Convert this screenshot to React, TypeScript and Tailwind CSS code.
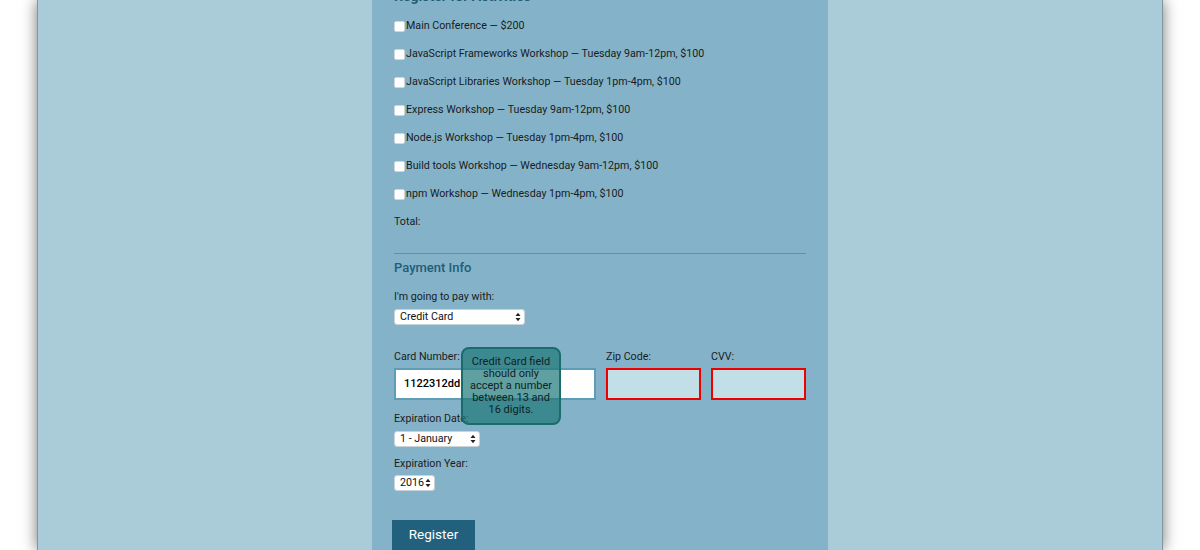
import React from "react";

const activities = [
  "Main Conference — $200",
  "JavaScript Frameworks Workshop — Tuesday 9am-12pm, $100",
  "JavaScript Libraries Workshop — Tuesday 1pm-4pm, $100",
  "Express Workshop — Tuesday 9am-12pm, $100",
  "Node.js Workshop — Tuesday 1pm-4pm, $100",
  "Build tools Workshop — Wednesday 9am-12pm, $100",
  "npm Workshop — Wednesday 1pm-4pm, $100",
];

function Arrows() {
  return (
    <svg width="6" height="10" viewBox="0 0 6 10" className="shrink-0">
      <path d="M0.5 4 L3 0.8 L5.5 4 Z" fill="#222" />
      <path d="M0.5 6 L3 9.2 L5.5 6 Z" fill="#222" />
    </svg>
  );
}

function FakeSelect({ label, width }: { label: string; width: string }) {
  return (
    <div
      className={`${width} h-[16px] bg-white rounded-[3px] border border-[#c9d3d8] flex items-center justify-between pl-[5px] pr-[3px] text-[10.7px] text-[#111] leading-none`}
    >
      <span>{label}</span>
      <Arrows />
    </div>
  );
}

export default function App() {
  return (
    <div
      className="w-[1200px] h-[550px] bg-white overflow-hidden flex justify-center"
      style={{ fontFamily: "Roboto, 'Liberation Sans', sans-serif" }}
    >
      <div className="w-[1126px] h-[550px] bg-[#aacbd8] border-x border-[#7d96a1] shadow-[0_0_14px_rgba(0,0,0,0.55)] flex justify-center">
        <div className="w-[456px] bg-[#84b3c9] px-[22px] block text-[10.7px] text-[#1b1b1b]">
          <div className="-mt-[14px] h-[20px] leading-[20px] text-[14px] font-bold text-[#1f5d78] whitespace-nowrap">
            Register for Activities
          </div>
          <div className="mt-[6px]">
            {activities.map((a) => (
              <div key={a} className="h-[28px] flex items-center">
                <span className="w-[11px] h-[11px] bg-white rounded-[2px] border border-[#d0d6d9] shrink-0 mt-[1px]" />
                <span className="ml-[1px] whitespace-nowrap">{a}</span>
              </div>
            ))}
            <div className="h-[28px] flex items-center">Total:</div>
          </div>
          <div className="mt-[17px] h-px bg-[#5f91a8]" />
          <div className="h-[28px] leading-[28px] text-[13px] font-medium text-[#1f5d78]">
            Payment Info
          </div>
          <div className="mt-[4px] h-[20px] leading-[22px]">I'm going to pay with:</div>
          <div className="mt-[3px]">
            <FakeSelect label="Credit Card" width="w-[131px]" />
          </div>
          <div className="mt-[23px] flex gap-[10px]">
            <div className="relative w-[202px] shrink-0">
              <div className="h-[16px] leading-[18px]">Card Number:</div>
              <div className="mt-[4px] h-[32px] bg-white border-2 border-[#5f9cb6] flex items-center pl-[8px] text-[11px] font-medium text-black">
                1122312dd
              </div>
              <div className="absolute left-[67px] -top-[1px] w-[100px] h-[78px] rounded-[8px] border-2 border-[#1a6b6b] bg-[rgba(30,120,120,0.7)] flex items-center justify-center text-center text-[11px] leading-[12px] text-[#0d2326] px-[4px]">
                Credit Card field should only accept a number between 13 and 16 digits.
              </div>
            </div>
            <div className="w-[95px] shrink-0">
              <div className="h-[16px] leading-[18px]">Zip Code:</div>
              <div className="mt-[4px] h-[32px] bg-[#c2dfe8] border-2 border-[#ee0000]" />
            </div>
            <div className="w-[95px] shrink-0">
              <div className="h-[16px] leading-[18px]">CVV:</div>
              <div className="mt-[4px] h-[32px] bg-[#c2dfe8] border-2 border-[#ee0000]" />
            </div>
          </div>
          <div className="mt-[10px] h-[16px] leading-[18px]">Expiration Date:</div>
          <div className="mt-[5px]">
            <FakeSelect label="1 - January" width="w-[86px]" />
          </div>
          <div className="mt-[8px] h-[16px] leading-[18px]">Expiration Year:</div>
          <div className="mt-[4px]">
            <FakeSelect label="2016" width="w-[41px]" />
          </div>
          <div className="mt-[29px] -ml-[2px]">
            <div className="w-[83px] h-[32px] bg-[#22617d] text-white text-[13.5px] leading-none flex items-center justify-center pb-[2px]">
              Register
            </div>
          </div>
        </div>
      </div>
    </div>
  );
}
